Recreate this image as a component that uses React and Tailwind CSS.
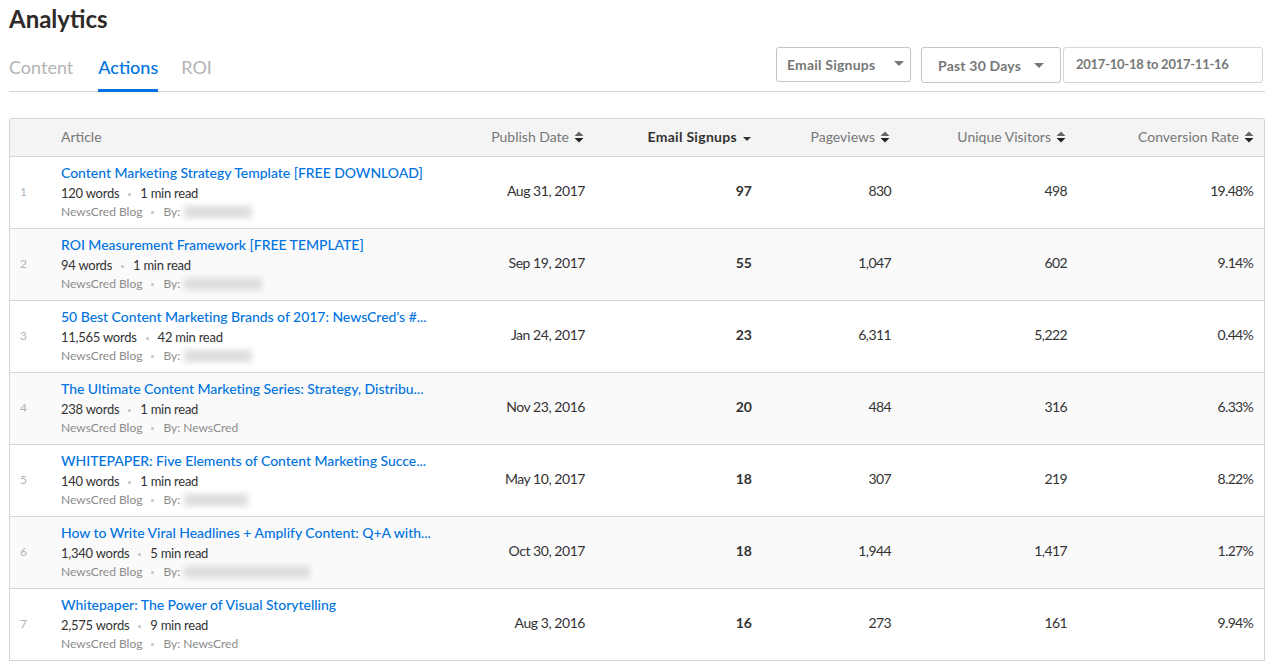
import React from 'react';

const rows = [
  { title: 'Content Marketing Strategy Template [FREE DOWNLOAD]', words: '120 words', read: '1 min read', blur: 'w-[68px]', date: 'Aug 31, 2017', signups: '97', views: '830', visitors: '498', rate: '19.48%' },
  { title: 'ROI Measurement Framework [FREE TEMPLATE]', words: '94 words', read: '1 min read', blur: 'w-[78px]', date: 'Sep 19, 2017', signups: '55', views: '1,047', visitors: '602', rate: '9.14%' },
  { title: "50 Best Content Marketing Brands of 2017: NewsCred's #...", words: '11,565 words', read: '42 min read', blur: 'w-[68px]', date: 'Jan 24, 2017', signups: '23', views: '6,311', visitors: '5,222', rate: '0.44%' },
  { title: 'The Ultimate Content Marketing Series: Strategy, Distribu...', words: '238 words', read: '1 min read', author: 'NewsCred', date: 'Nov 23, 2016', signups: '20', views: '484', visitors: '316', rate: '6.33%' },
  { title: 'WHITEPAPER: Five Elements of Content Marketing Succe...', words: '140 words', read: '1 min read', blur: 'w-[64px]', date: 'May 10, 2017', signups: '18', views: '307', visitors: '219', rate: '8.22%' },
  { title: 'How to Write Viral Headlines + Amplify Content: Q+A with...', words: '1,340 words', read: '5 min read', blur: 'w-[126px]', date: 'Oct 30, 2017', signups: '18', views: '1,944', visitors: '1,417', rate: '1.27%' },
  { title: 'Whitepaper: The Power of Visual Storytelling', words: '2,575 words', read: '9 min read', author: 'NewsCred', date: 'Aug 3, 2016', signups: '16', views: '273', visitors: '161', rate: '9.94%' },
];

const SortIcon = () => (
  <svg width="10" height="12" viewBox="0 0 10 12" className="ml-[5px] shrink-0">
    <path d="M5 0.5 L9.5 5 L0.5 5 Z" fill="#666" />
    <path d="M0.5 7 L9.5 7 L5 11.5 Z" fill="#222" />
  </svg>
);

const Caret = () => (
  <svg width="10" height="5" viewBox="0 0 10 5" className="shrink-0">
    <path d="M0 0 L10 0 L5 5 Z" fill="#777" />
  </svg>
);

const Dot = ({ className }) => <span className={`inline-block size-[3px] rounded-full bg-[#c4c4c4] align-middle ${className}`} />;

const App = () => {
  return (
    <div className="h-[662px] w-[1265px] overflow-hidden bg-white font-['Lato',sans-serif] text-[#333]">
      <div className="pl-[9px]">
        <h1 className="pt-[6px] text-[24px] leading-[26px] font-bold text-[#2f2a28]">Analytics</h1>

        <div className="mt-[14px] flex h-[46px] items-end justify-between border-b border-[#d5d5d5]">
          <div className="flex text-[18px] leading-[22px]">
            <span className="mr-[25px] pb-[11px] text-[#b3b3b3]">Content</span>
            <span className="mr-[23px] -mb-px border-b-[3px] border-[#0073e0] pb-[11px] font-medium text-[#0073e0]">Actions</span>
            <span className="pb-[11px] text-[#b3b3b3]">ROI</span>
          </div>
          <div className="mr-[2px] mb-[8px] flex items-start text-[14px] font-bold tracking-[0.2px] text-[#777]">
            <div className="mr-[10px] flex h-[35px] w-[135px] items-center justify-between rounded-[3px] border border-[#c4c4c4] pr-[2px] pl-[10px]">
              <span className="-mt-px">Email Signups</span>
              <span className="-mt-[2px] mr-[2px] pr-[2px]"><Caret /></span>
            </div>
            <div className="mr-[2px] flex h-[36px] w-[140px] items-center justify-between rounded-[3px] border border-[#c4c4c4] pr-[16px] pl-[16px]">
              <span>Past 30 Days</span>
              <Caret />
            </div>
            <div className="flex h-[36px] w-[200px] items-center rounded-[3px] border border-[#d5d5d5] pl-[12px] text-[13px] tracking-[-0.25px]">2017-10-18 to 2017-11-16</div>
          </div>
        </div>

        <div className="mt-[26px] overflow-hidden rounded-t-[3px] border border-b-0 border-[#d5d5d5]">
          <div className="flex h-[38px] items-center border-b border-[#d5d5d5] bg-[#f4f4f4] pb-[2px] text-[14px] text-[#777]">
            <div className="w-[51px]" />
            <div className="w-[428px]">Article</div>
            <div className="flex w-[95px] items-center justify-end">Publish Date<SortIcon /></div>
            <div className="flex w-[167px] items-center justify-end font-bold tracking-[0.3px] text-[#333]">
              Email Signups
              <svg width="8" height="4" viewBox="0 0 8 4" className="mt-[4px] ml-[6px]"><path d="M0 0 L8 0 L4 4 Z" fill="#333" /></svg>
            </div>
            <div className="flex w-[139px] items-center justify-end">Pageviews<SortIcon /></div>
            <div className="flex w-[176px] items-center justify-end">Unique Visitors<SortIcon /></div>
            <div className="flex w-[188px] items-center justify-end">Conversion Rate<SortIcon /></div>
          </div>

          {rows.map((row, i) => (
            <div key={row.title} className={`flex h-[72px] items-center border-b border-[#d5d5d5] pb-[3px] text-[14px] ${i % 2 === 1 ? 'bg-[#fafafa]' : 'bg-white'}`}>
              <div className="w-[51px] pt-[1px] pl-[10px] text-[12px] text-[#b3b3b3]">{i + 1}</div>
              <div className="w-[429px] pt-[2px]">
                <div className="text-[14px] leading-[20px] font-medium tracking-[-0.03px] whitespace-nowrap text-[#0073e0]">{row.title}</div>
                <div className="text-[13px] leading-[20px] tracking-[-0.25px] text-[#333]">{row.words}<Dot className="mx-[9px]" />{row.read}</div>
                <div className="flex items-center text-[12px] leading-[18px] text-[#8c8c8c]">
                  NewsCred Blog<Dot className="mx-[9px]" />By:
                  {row.author ? <span className="ml-[3px]">{row.author}</span> : <span className={`ml-[4px] h-[12px] bg-[#dcdcdc] blur-[3px] ${row.blur}`} />}
                </div>
              </div>
              <div className="-mt-[2px] w-[95px] text-right tracking-[-0.45px]">{row.date}</div>
              <div className="-mt-[2px] w-[167px] text-right font-bold">{row.signups}</div>
              <div className="-mt-[2px] w-[139px] text-right tracking-[-0.6px]">{row.views}</div>
              <div className="-mt-[2px] w-[176px] text-right tracking-[-0.6px]">{row.visitors}</div>
              <div className="-mt-[2px] w-[186px] text-right tracking-[-0.7px]">{row.rate}</div>
            </div>
          ))}
        </div>
      </div>
    </div>
  );
};

export default App;
